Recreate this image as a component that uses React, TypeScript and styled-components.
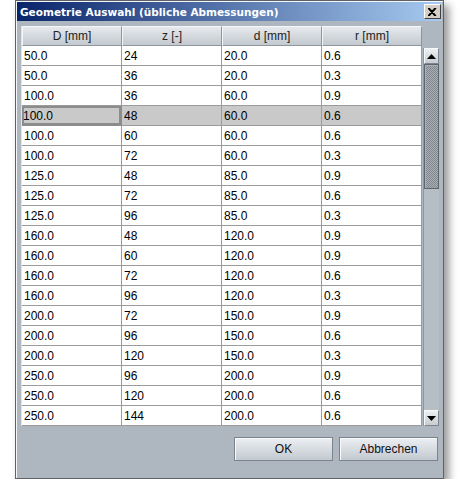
import * as React from "react";
import styled, { createGlobalStyle } from "styled-components";

const GlobalStyle = createGlobalStyle`
    body {
        margin: 0;
        background: #fff;
        font-family: "Liberation Sans", Arial, sans-serif;
    }
`;

const rows: string[][] = [
    ["50.0", "24", "20.0", "0.6"],
    ["50.0", "36", "20.0", "0.3"],
    ["100.0", "36", "60.0", "0.9"],
    ["100.0", "48", "60.0", "0.6"],
    ["100.0", "60", "60.0", "0.6"],
    ["100.0", "72", "60.0", "0.3"],
    ["125.0", "48", "85.0", "0.9"],
    ["125.0", "72", "85.0", "0.6"],
    ["125.0", "96", "85.0", "0.3"],
    ["160.0", "48", "120.0", "0.9"],
    ["160.0", "60", "120.0", "0.9"],
    ["160.0", "72", "120.0", "0.6"],
    ["160.0", "96", "120.0", "0.3"],
    ["200.0", "72", "150.0", "0.9"],
    ["200.0", "96", "150.0", "0.6"],
    ["200.0", "120", "150.0", "0.3"],
    ["250.0", "96", "200.0", "0.9"],
    ["250.0", "120", "200.0", "0.6"],
    ["250.0", "144", "200.0", "0.6"],
];

const columns = ["D [mm]", "z [-]", "d [mm]", "r [mm]"];
const SELECTED = 3;

const Window = styled.div`
    box-sizing: border-box;
    display: flex;
    flex-direction: column;
    margin-left: 15px;
    width: 429px;
    height: 479px;
    padding: 1px;
    background: #aeb7c0;
    border: 1px solid #5e6266;
    box-shadow: inset 1px 1px 0 #f4f6f8, 5px 5px 8px rgba(0, 0, 0, 0.4);
`;

const TitleBar = styled.div`
    display: flex;
    align-items: center;
    justify-content: space-between;
    height: 19px;
    padding: 0 1px 0 3px;
    background: linear-gradient(to right, #0a246a, #a6caf0);
    color: #fff;
    font-family: "DejaVu Sans", Verdana, sans-serif;
    font-weight: bold;
    font-size: 10.5px;
`;

const CloseButton = styled.div`
    box-sizing: border-box;
    display: flex;
    align-items: center;
    justify-content: center;
    width: 17px;
    height: 15px;
    background: #d4d0c8;
    border: 1px solid;
    border-color: #fff #404040 #404040 #fff;
`;

const Body = styled.div`
    flex: 1;
    display: flex;
    flex-direction: column;
    padding: 5px 3px 0 4px;
`;

const ScrollPane = styled.div`
    display: flex;
    height: 400px;
    border-left: 1px solid #dfe4e8;
`;

const Table = styled.div`
    width: 400px;
    display: flex;
    flex-direction: column;
`;

const Grid = styled.div<{ $selected?: boolean }>`
    display: grid;
    grid-template-columns: repeat(4, 100px);
    height: 20px;
    background: ${p => (p.$selected ? "#c9c9c9" : "#fff")};
`;

const HeaderCell = styled.div`
    box-sizing: border-box;
    display: flex;
    align-items: center;
    justify-content: center;
    background: linear-gradient(#e6e9ed, #c3c9cf);
    border-right: 1px solid #8e959c;
    border-bottom: 1px solid #8e959c;
    border-top: 1px solid #f4f6f8;
    border-left: 1px solid #f4f6f8;
    font-size: 12px;
    color: #222;
`;

const Cell = styled.div<{ $focused?: boolean }>`
    box-sizing: border-box;
    display: flex;
    align-items: center;
    padding-left: ${p => (p.$focused ? "1px" : "2px")};
    border-right: 1px solid #9b9b9b;
    border-bottom: 1px solid #9b9b9b;
    font-size: 12px;
    color: #000;
    ${p => p.$focused && "box-shadow: inset 0 0 0 2px #8c8c8c; border-color: #8c8c8c;"}
`;

const ScrollBar = styled.div`
    box-sizing: border-box;
    display: flex;
    flex-direction: column;
    width: 17px;
    margin-top: 22px;
    margin-left: 1px;
    background: #b8c0c8;
    border-left: 1px solid #8e959c;
`;

const ArrowButton = styled.div`
    box-sizing: border-box;
    display: flex;
    align-items: center;
    justify-content: center;
    height: 16px;
    background: linear-gradient(#eef0f2, #c6ccd2);
    border: 1px solid;
    border-color: #f8f9fa #7d858d #7d858d #f8f9fa;
`;

const Thumb = styled.div`
    box-sizing: border-box;
    height: 125px;
    border: 1px solid #5f656c;
    box-shadow: inset 1px 1px 0 #a9afb5;
    background-color: #868d94;
    background-image: conic-gradient(#aab0b6 25%, #7f868d 0 50%, #aab0b6 0 75%, #7f868d 0);
    background-size: 2px 2px;
`;

const Track = styled.div`
    flex: 1;
    background: #b5bdc5;
`;

const Footer = styled.div`
    display: flex;
    justify-content: flex-end;
    gap: 6px;
    padding: 11px 1px 0 0;
`;

const Button = styled.button`
    box-sizing: border-box;
    width: 99px;
    height: 24px;
    padding: 0;
    background: linear-gradient(#eceff2, #c2c9d0);
    border: 1px solid #7b838b;
    box-shadow: inset 1px 1px 0 #f8f9fa;
    font-family: "Liberation Sans", Arial, sans-serif;
    font-size: 12px;
    color: #111;
`;

const Arrow: React.FC<{ up?: boolean }> = ({ up }) => (
    <svg width="9" height="5" viewBox="0 0 9 5">
        <path d={up ? "M4.5 0 L9 5 L0 5 Z" : "M0 0 L9 0 L4.5 5 Z"} fill="#000" />
    </svg>
);

const App: React.FunctionComponent = () => (
    <>
        <GlobalStyle />
        <Window>
            <TitleBar>
                <span>Geometrie Auswahl (übliche Abmessungen)</span>
                <CloseButton>
                    <svg width="9" height="8" viewBox="0 0 9 8">
                        <path d="M1 0 L8 8 M8 0 L1 8 M0 0 L7 8 M7 0 L0 8" stroke="#000" strokeWidth="1.2" />
                    </svg>
                </CloseButton>
            </TitleBar>
            <Body>
                <ScrollPane>
                    <Table>
                        <Grid>
                            {columns.map(c => (
                                <HeaderCell key={c}>{c}</HeaderCell>
                            ))}
                        </Grid>
                        {rows.map((r, i) => (
                            <Grid key={i} $selected={i === SELECTED}>
                                {r.map((v, j) => (
                                    <Cell key={j} $focused={i === SELECTED && j === 0}>
                                        {v}
                                    </Cell>
                                ))}
                            </Grid>
                        ))}
                    </Table>
                    <ScrollBar>
                        <ArrowButton><Arrow up /></ArrowButton>
                        <Thumb />
                        <Track />
                        <ArrowButton><Arrow /></ArrowButton>
                    </ScrollBar>
                </ScrollPane>
                <Footer>
                    <Button>OK</Button>
                    <Button>Abbrechen</Button>
                </Footer>
            </Body>
        </Window>
    </>
);

export default App;
